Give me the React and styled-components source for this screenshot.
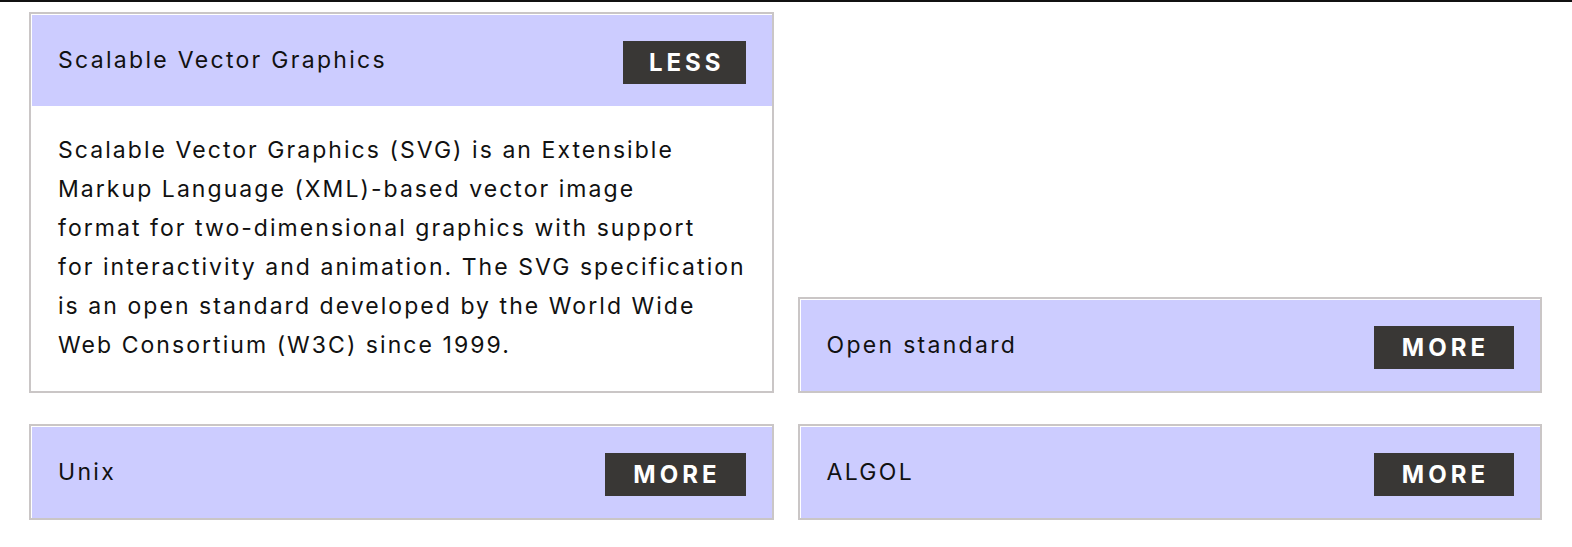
import React, { useState } from "react";
import styled, { createGlobalStyle } from "styled-components";

const GlobalStyle = createGlobalStyle`
  body {
    margin: 0;
    background: #fff;
    font-family: Inter, "Open Sans", sans-serif;
    color: #111;
  }
`;

const Page = styled.div`
  border-top: 2px solid #111;
  padding: 10px 30px 20px 29px;
`;

const Grid = styled.div`
  display: grid;
  grid-template-columns: 1fr 1fr;
  column-gap: 24px;
  row-gap: 31px;
  align-items: end;
`;

const Card = styled.section`
  border: 2px solid #cac6c6;
  background: #fff;
`;

const Header = styled.div`
  display: flex;
  align-items: center;
  justify-content: space-between;
  height: 92px;
  box-sizing: border-box;
  padding: 4px 26px 0 27px;
  background: #ccccff;
  box-shadow: inset 1px 1px 0 #fff;
`;

const Title = styled.h3`
  margin: 0 0 5px;
  font-size: 23px;
  font-weight: 400;
  letter-spacing: 2.3px;
`;

const Toggle = styled.button`
  height: 43px;
  padding: 0 ${(p) => (p.$wide ? 25 : 21)}px 0 ${(p) => (p.$wide ? 28 : 26)}px;
  border: none;
  background: #393735;
  color: #fff;
  font-family: Inter, "Open Sans", sans-serif;
  font-size: 24px;
  font-weight: 700;
  letter-spacing: 4px;
  cursor: pointer;
`;

const Body = styled.p`
  margin: 0;
  padding: 25px 20px 26px 27px;
  font-size: 23px;
  line-height: 39px;
  letter-spacing: 2.05px;
  white-space: nowrap;
`;

const items = [
  {
    title: "Scalable Vector Graphics",
    lines: [
      "Scalable Vector Graphics (SVG) is an Extensible",
      "Markup Language (XML)-based vector image",
      "format for two-dimensional graphics with support",
      "for interactivity and animation. The SVG specification",
      "is an open standard developed by the World Wide",
      "Web Consortium (W3C) since 1999.",
    ],
    open: true,
  },
  { title: "Open standard", lines: [], open: false },
  { title: "Unix", lines: [], open: false },
  { title: "ALGOL", lines: [], open: false },
];

function Panel({ item }) {
  const [open, setOpen] = useState(item.open);
  return (
    <Card>
      <Header>
        <Title>{item.title}</Title>
        <Toggle $wide={!open} onClick={() => setOpen(!open)}>
          {open ? "LESS" : "MORE"}
        </Toggle>
      </Header>
      {open && (
        <Body>
          {item.lines.map((line, i) => (
            <React.Fragment key={i}>
              {line}
              {i < item.lines.length - 1 && <br />}
            </React.Fragment>
          ))}
        </Body>
      )}
    </Card>
  );
}

export default function App() {
  return (
    <>
      <GlobalStyle />
      <Page>
        <Grid>
          {items.map((item) => (
            <Panel key={item.title} item={item} />
          ))}
        </Grid>
      </Page>
    </>
  );
}
